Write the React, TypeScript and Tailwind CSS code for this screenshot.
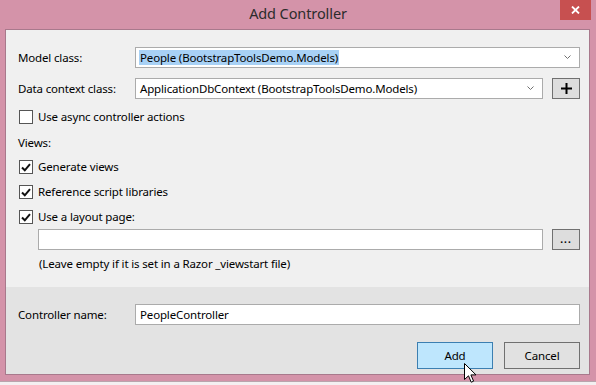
import React from "react";

const font = { fontFamily: '"Noto Sans", "Open Sans", sans-serif' };

const Chevron = () => (
  <svg width="7" height="5" viewBox="0 0 7 5" className="shrink-0">
    <polyline points="0.5,0.5 3.5,3.5 6.5,0.5" fill="none" stroke="#707070" strokeWidth="1" />
  </svg>
);

const Combo = ({ text, selected }: { text: string; selected?: boolean }) => (
  <div className="flex-1 h-[21px] bg-white border border-[#ababab] flex items-center pl-[4px] pr-[8px]">
    <span className={selected ? "bg-[#a8d1f5] px-[1px] -ml-[1px] leading-[15px]" : "leading-[15px]"}>{text}</span>
    <div className="flex-1" />
    <Chevron />
  </div>
);

const Check = ({ checked, label }: { checked: boolean; label: string }) => (
  <div className="flex items-center h-[14px] ml-[1px]">
    <div className="w-[14px] h-[14px] bg-white border border-[#555555] flex items-center justify-center shrink-0">
      {checked && (
        <svg width="10" height="9" viewBox="0 0 10 9">
          <polyline points="1,4.5 3.8,7.3 9,1.2" fill="none" stroke="#111" strokeWidth="2" />
        </svg>
      )}
    </div>
    <span className="ml-[5px]">{label}</span>
  </div>
);

const SmallButton = ({ children }: { children: React.ReactNode }) => (
  <div className="w-[28px] h-[21px] bg-[#dddddd] border border-[#707070] flex items-center justify-center shrink-0">
    {children}
  </div>
);

export default function App() {
  return (
    <div
      className="w-[596px] h-[385px] bg-[#f4f0f1] text-[11.5px] tracking-[-0.15px] text-black relative overflow-hidden"
      style={font}
    >
      <div className="h-[382px] bg-[#d493a9] border-b border-[#b9a5ad] flex flex-col">
        {/* title bar */}
        <div className="h-[29px] relative flex items-center justify-center shrink-0">
          <span className="text-[14.5px] tracking-[-0.1px] text-[#2c2c2c] -mt-[1px]">Add Controller</span>
          <div className="absolute top-0 right-[5px] w-[31px] h-[20px] bg-[#c75050] flex items-center justify-center">
            <svg width="9" height="8" viewBox="0 0 9 8">
              <path d="M1 0.5 L8 7.5 M8 0.5 L1 7.5" stroke="#fff" strokeWidth="1.8" />
            </svg>
          </div>
        </div>

        {/* client area */}
        <div className="ml-[5px] w-[585px] h-[346px] border border-[#a8798c] flex flex-col shrink-0">
          <div className="h-[257px] bg-[#f0f0f0] pl-[12px] pr-[9px] pt-[17px] flex flex-col shrink-0">
            <div className="flex items-center h-[21px]">
              <div className="w-[117px]">Model class:</div>
              <Combo text="People (BootstrapToolsDemo.Models)" selected />
            </div>
            <div className="flex items-center h-[21px] mt-[10px]">
              <div className="w-[117px]">Data context class:</div>
              <Combo text="ApplicationDbContext (BootstrapToolsDemo.Models)" />
              <div className="w-[9px]" />
              <SmallButton>
                <svg width="11" height="11" viewBox="0 0 11 11">
                  <path d="M5.5 0 V11 M0 5.5 H11" stroke="#000" strokeWidth="2" />
                </svg>
              </SmallButton>
            </div>
            <div className="mt-[11px]">
              <Check checked={false} label="Use async controller actions" />
            </div>
            <div className="mt-[11px] h-[16px] leading-[16px]">Views:</div>
            <div className="mt-[9px] flex flex-col gap-[11px]">
              <Check checked label="Generate views" />
              <Check checked label="Reference script libraries" />
              <Check checked label="Use a layout page:" />
            </div>
            <div className="flex items-center h-[21px] mt-[5px] pl-[20px]">
              <div className="flex-1 h-[21px] bg-white border border-[#ababab]" />
              <div className="w-[9px]" />
              <SmallButton>
                <span className="text-[10px] leading-[10px] font-bold tracking-[1px] -mt-[1px]">...</span>
              </SmallButton>
            </div>
            <div className="mt-[6px] h-[16px] leading-[16px] pl-[21px]">
              (Leave empty if it is set in a Razor _viewstart file)
            </div>
          </div>

          <div className="flex-1 bg-[#e3e3e3] pl-[12px] pr-[9px] pt-[17px] flex flex-col">
            <div className="flex items-center h-[21px]">
              <div className="w-[117px]">Controller name:</div>
              <div className="flex-1 h-[21px] bg-white border border-[#ababab] flex items-center pl-[4px]">
                PeopleController
              </div>
            </div>
            <div className="flex justify-end gap-[11px] mt-[17px]">
              <div className="w-[76px] h-[27px] bg-[#bee6fd] border border-[#3c7fb1] flex items-center justify-center">
                Add
              </div>
              <div className="w-[76px] h-[27px] bg-[#e1e1e1] border border-[#707070] flex items-center justify-center">
                Cancel
              </div>
            </div>
          </div>
        </div>
      </div>

      {/* mouse pointer */}
      <svg className="absolute left-[464px] top-[363px]" width="14" height="22" viewBox="0 0 14 22">
        <path
          d="M0.5 0.5 L0.5 16.5 L4.5 12.8 L7.2 19.2 L9.6 18.2 L6.9 11.9 L12 11.9 Z"
          fill="#fff"
          stroke="#000"
          strokeWidth="1"
          strokeLinejoin="miter"
        />
      </svg>
    </div>
  );
}
